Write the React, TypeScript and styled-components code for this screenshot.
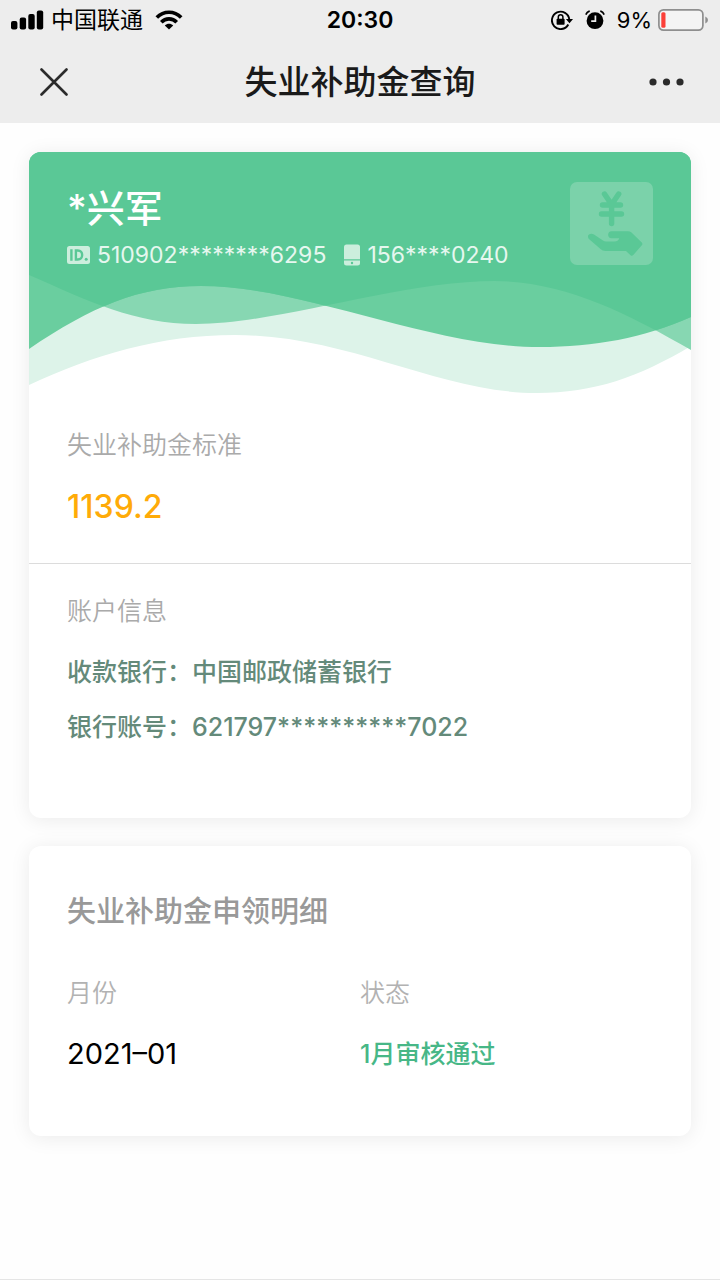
import React from "react";
import styled, { createGlobalStyle } from "styled-components";

const GlobalStyle = createGlobalStyle`
  *, *::before, *::after { box-sizing: border-box; }
  body {
    margin: 0;
    background: #fefefe;
    color: #111;
    font-family: Inter, "Noto Sans CJK SC", sans-serif;
  }
  h1, h2, dl, dt, dd, p { margin: 0; }
`;

const Page = styled.div`
  display: flex;
  flex-direction: column;
  min-height: 100vh;
  border-bottom: 1px solid #e5e5e5;
`;

const TopArea = styled.header`
  background: #ededed;
`;

const StatusBar = styled.div`
  display: grid;
  grid-template-columns: 1fr auto 1fr;
  align-items: center;
  height: 40px;
  padding: 0 11px;
  color: #000;
`;

const StatusGroup = styled.div<{ $end?: boolean }>`
  display: flex;
  align-items: center;
  justify-content: ${(p) => (p.$end ? "flex-end" : "flex-start")};
  gap: ${(p) => (p.$end ? "12px" : "7px")};
`;

const Carrier = styled.span`
  font-size: 23px;
  line-height: 32px;
  margin-right: 5px;
`;

const Clock = styled.time`
  font-size: 23px;
  line-height: 32px;
  font-weight: 600;
`;

const Battery = styled.span`
  display: flex;
  align-items: center;
  gap: 6px;
  font-size: 22px;
  line-height: 32px;
`;

const Icon = styled.svg`
  display: block;
  flex: none;
`;

const NavBar = styled.nav`
  display: grid;
  grid-template-columns: 48px 1fr 48px;
  align-items: center;
  height: 83px;
  padding: 0 30px;
`;

const NavButton = styled.button`
  display: flex;
  align-items: center;
  justify-content: center;
  width: 48px;
  height: 48px;
  padding: 0;
  border: 0;
  background: none;
  cursor: pointer;
`;

const NavTitle = styled.h1`
  font-size: 33px;
  line-height: 48px;
  font-weight: 500;
  text-align: center;
  color: #1a1a1a;
`;

const Content = styled.main`
  display: flex;
  flex-direction: column;
  gap: 28px;
  padding: 29px;
`;

const Card = styled.section`
  overflow: hidden;
  border-radius: 12px;
  background: #fff;
  box-shadow: 0 2px 20px rgba(0, 0, 0, 0.08);
`;

const Hero = styled.div`
  position: relative;
  height: 242px;
  color: #fff;
`;

const Waves = styled.svg`
  position: absolute;
  inset: 0;
  width: 100%;
  height: 100%;
`;

const HeroContent = styled.div`
  position: relative;
  display: flex;
  justify-content: space-between;
  padding: 30px 38px;
`;

const Name = styled.h2`
  font-size: 38px;
  line-height: 52px;
  font-weight: 500;
`;

const Identity = styled.div`
  display: flex;
  align-items: center;
  gap: 18px;
  margin-top: 5px;
`;

const IdentityItem = styled.span`
  display: flex;
  align-items: center;
  gap: 7px;
  font-size: 23px;
  line-height: 32px;
  color: #e6f7ef;
`;

const Block = styled.div<{ $divided?: boolean }>`
  padding: ${(p) => (p.$divided ? "29px 38px 73px" : "33px 38px 36px")};
  border-top: ${(p) => (p.$divided ? "1px solid #dcdcdc" : "0")};
`;

const Label = styled.h2`
  font-size: 25px;
  line-height: 36px;
  font-weight: 350;
  color: #aaa;
`;

const Amount = styled.p`
  margin-top: 24px;
  font-size: 32px;
  line-height: 40px;
  font-weight: 500;
  color: #ffab08;
`;

const AccountList = styled.dl`
  display: flex;
  flex-direction: column;
  gap: 19px;
  margin-top: 25px;
`;

const AccountRow = styled.div`
  display: flex;
  font-size: 25px;
  line-height: 36px;
  font-weight: 500;
  color: #648a7a;
`;

const Details = styled(Card)`
  padding: 46px 38px 62px;
`;

const DetailsTitle = styled.h2`
  font-size: 29px;
  line-height: 40px;
  font-weight: 500;
  color: #999;
`;

const Table = styled.table`
  width: 100%;
  margin-top: 43px;
  border-collapse: collapse;
  table-layout: fixed;
  text-align: left;
`;

const HeadCell = styled.th`
  padding: 0 0 23px;
  font-size: 25px;
  line-height: 36px;
  font-weight: 350;
  color: #b2b2b2;
`;

const Cell = styled.td<{ $passed?: boolean }>`
  height: 40px;
  padding: 0;
  font-size: ${(p) => (p.$passed ? "25px" : "29px")};
  line-height: 40px;
  font-weight: ${(p) => (p.$passed ? 500 : 400)};
  color: ${(p) => (p.$passed ? "#47b787" : "#000")};
`;

const SignalIcon = () => (
  <Icon width="33" height="20" viewBox="0 0 33 20" aria-hidden="true">
    <rect x="0" y="11" width="6.4" height="8.500" rx="2" />
    <rect x="8.700" y="7.500" width="6.400" height="12" rx="2" />
    <rect x="17.300" y="4" width="6.400" height="15.500" rx="2" />
    <rect x="25.800" y="0.500" width="6.400" height="19" rx="2" />
  </Icon>
);

const WifiIcon = () => (
  <Icon width="28" height="20" viewBox="0 0 28 20" aria-hidden="true">
    <g fill="none" stroke="#000" strokeWidth="3.600">
      <path d="M1.800 7.600C8.600 0.500 19.400 0.500 26.200 7.600" />
      <path d="M6.300 12.200C10.500 7.700 17.500 7.700 21.700 12.200" />
    </g>
    <path d="M9.800 15.600C12.200 13.200 15.800 13.200 18.200 15.600L14 19.600Z" />
  </Icon>
);

const RotationLockIcon = () => (
  <Icon width="22" height="20" viewBox="0 0 22 20" aria-hidden="true">
    <path d="M17.300 14.500A8.700 8.700 0 1 1 18.300 9.500" fill="none" stroke="#000" strokeWidth="1.900" />
    <path d="M14.900 9H22L18.500 13.200Z" />
    <rect x="5.600" y="8.800" width="8" height="6" rx="0.800" />
    <path d="M7.300 9V7a2.300 2.300 0 0 1 4.600 0V9" fill="none" stroke="#000" strokeWidth="1.500" />
  </Icon>
);

const AlarmIcon = () => (
  <Icon width="20" height="20" viewBox="0 0 20 20" aria-hidden="true">
    <circle cx="10" cy="10.700" r="8.400" />
    <path d="M10.400 5.500V11.200H6.200" fill="none" stroke="#ededed" strokeWidth="1.700" />
    <path d="M1.200 4Q2 2 4 1.300M16 1.300Q18 2 18.800 4" fill="none" stroke="#000" strokeWidth="1.800" strokeLinecap="round" />
  </Icon>
);

const BatteryIcon = () => (
  <Icon width="51" height="22" viewBox="0 0 51 22" aria-hidden="true">
    <rect x="0.900" y="0.900" width="44" height="20.200" rx="4.500" fill="#f4f4f4" stroke="#8e8e8e" strokeWidth="1.700" />
    <rect x="3.300" y="3.300" width="4.200" height="15.400" rx="1.500" fill="#fb3f38" />
    <path d="M47.300 7.500Q50 8.500 50 11T47.300 14.500Z" fill="#8e8e8e" />
  </Icon>
);

const IdIcon = () => (
  <Icon width="23" height="18" viewBox="0 0 23 18" aria-hidden="true">
    <rect width="23" height="18" rx="2.500" fill="#cceedd" />
    <path d="M4.400 3.300V14.700M8.900 4.500H10.800C16.600 4.500 16.600 13.500 10.800 13.500H8.900Z" fill="none" stroke="#5ac896" strokeWidth="2.400" />
    <circle cx="19.200" cy="13.300" r="1.500" fill="#5ac896" />
  </Icon>
);

const PhoneIcon = () => (
  <Icon width="16" height="22" viewBox="0 0 16 22" aria-hidden="true">
    <path d="M2.500 0.500H13.500Q16 0.500 16 3V15.300H0V3Q0 0.500 2.500 0.500Z" fill="#cceedd" />
    <path d="M0 16.500H16V19Q16 21.500 13.500 21.500H2.500Q0 21.500 0 19Z" fill="#cceedd" />
    <circle cx="8" cy="19" r="1.200" fill="#5ac896" />
  </Icon>
);

const BenefitIcon = () => (
  <Icon width="83" height="83" viewBox="0 0 83 83" aria-hidden="true">
    <rect width="83" height="83" rx="7" fill="#7bd2aa" />
    <g fill="none" stroke="#5ac896" strokeWidth="5.400" strokeLinecap="round" strokeLinejoin="round">
      <path d="M34.500 12L41.600 22.500L48.700 12M41.600 23V41.500M32.500 23H50.500M31.500 32H51.500" />
    </g>
    <path
      d="M18 55C17.500 52 21.500 50.800 24 52.500L33 58.500Q34.500 59.500 36 59.500H44.500Q48 59.500 49.300 56.300H41.500C37 56.300 37 49.300 41.500 49.300H58Q60 49.300 61.500 50.500L71.800 60.500Q73 62 71.800 63.300L63.300 73Q62 74.500 60.500 73.200L56 69H35.500Q32.500 69 30.500 67L19.500 57.500Q18.200 56.500 18 55Z"
      fill="#5ac896"
    />
  </Icon>
);

const WAVE_FRONT =
  "M0 0H662V165C615 186 565 195 511 195C400 195 275 134 172 134C110 134 62 155 0 197Z";
const WAVE_BACK =
  "M0 0H662V198C600 162 535 129 466 129C370 129 250 172 167 172C105 172 60 149 0 123Z";
const WAVE_LIGHT =
  "M0 0H662V194C610 225 565 241 508 241C410 241 320 183 206 183C130 183 65 203 0 233Z";

const HeroWaves = () => (
  <Waves viewBox="0 0 662 242" preserveAspectRatio="none" aria-hidden="true">
    <defs>
      <clipPath id="front-wave">
        <path d={WAVE_FRONT} />
      </clipPath>
    </defs>
    <path d={WAVE_LIGHT} fill="#ddf3e9" />
    <path d={WAVE_BACK} fill="#87d7b2" />
    <path d={WAVE_FRONT} fill="#6ace9f" />
    <path d={WAVE_BACK} fill="#5ac896" clipPath="url(#front-wave)" />
  </Waves>
);

const account = [
  { label: "收款银行：", value: "中国邮政储蓄银行" },
  { label: "银行账号：", value: "621797**********7022" },
];

const records = [{ month: "2021–01", status: "1月审核通过" }];

export default function App() {
  return (
    <Page>
      <GlobalStyle />
      <TopArea>
        <StatusBar>
          <StatusGroup>
            <SignalIcon />
            <Carrier>中国联通</Carrier>
            <WifiIcon />
          </StatusGroup>
          <Clock>20:30</Clock>
          <StatusGroup $end>
            <RotationLockIcon />
            <AlarmIcon />
            <Battery>
              9%
              <BatteryIcon />
            </Battery>
          </StatusGroup>
        </StatusBar>
        <NavBar>
          <NavButton type="button" aria-label="关闭">
            <Icon width="28" height="28" viewBox="0 0 28 28" aria-hidden="true">
              <path d="M1.500 1.500L26.500 26.500M26.500 1.500L1.500 26.500" stroke="#2b2b2b" strokeWidth="2.600" strokeLinecap="round" />
            </Icon>
          </NavButton>
          <NavTitle>失业补助金查询</NavTitle>
          <NavButton type="button" aria-label="更多">
            <Icon width="35" height="8" viewBox="0 0 35 8" fill="#2b2b2b" aria-hidden="true">
              <circle cx="4" cy="4" r="3.600" />
              <circle cx="17.500" cy="4" r="3.600" />
              <circle cx="31" cy="4" r="3.600" />
            </Icon>
          </NavButton>
        </NavBar>
      </TopArea>

      <Content>
        <Card>
          <Hero>
            <HeroWaves />
            <HeroContent>
              <div>
                <Name>*兴军</Name>
                <Identity>
                  <IdentityItem>
                    <IdIcon />
                    510902********6295
                  </IdentityItem>
                  <IdentityItem>
                    <PhoneIcon />
                    156****0240
                  </IdentityItem>
                </Identity>
              </div>
              <BenefitIcon />
            </HeroContent>
          </Hero>
          <Block>
            <Label>失业补助金标准</Label>
            <Amount>1139.2</Amount>
          </Block>
          <Block $divided>
            <Label>账户信息</Label>
            <AccountList>
              {account.map((row) => (
                <AccountRow key={row.label}>
                  <dt>{row.label}</dt>
                  <dd>{row.value}</dd>
                </AccountRow>
              ))}
            </AccountList>
          </Block>
        </Card>

        <Details>
          <DetailsTitle>失业补助金申领明细</DetailsTitle>
          <Table>
            <thead>
              <tr>
                <HeadCell scope="col">月份</HeadCell>
                <HeadCell scope="col">状态</HeadCell>
              </tr>
            </thead>
            <tbody>
              {records.map((record) => (
                <tr key={record.month}>
                  <Cell>{record.month}</Cell>
                  <Cell $passed>{record.status}</Cell>
                </tr>
              ))}
            </tbody>
          </Table>
        </Details>
      </Content>
    </Page>
  );
}
